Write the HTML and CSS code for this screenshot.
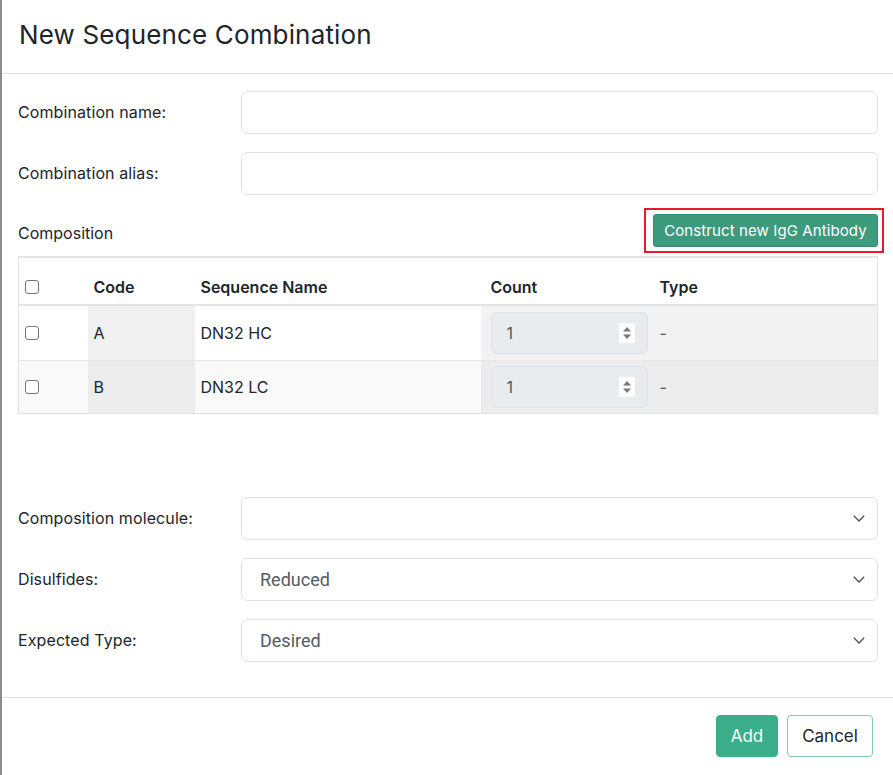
FILE: index.html
```html
<!DOCTYPE html>
<html>
<head>
<meta charset="utf-8">
<link rel="stylesheet" href="styles.css">
</head>
<body>
<div class="modal">
  <div class="modal-header">
    <h1 class="title">New Sequence Combination</h1>
  </div>
  <div class="modal-body">
    <div class="form-row">
      <label class="label">Combination name:</label>
      <div class="control"><input class="input" type="text"></div>
    </div>
    <div class="form-row">
      <label class="label">Combination alias:</label>
      <div class="control"><input class="input" type="text"></div>
    </div>
    <div class="comp-head">
      <span class="comp-label">Composition</span>
      <div class="highlight"><button class="btn-construct">Construct new IgG Antibody</button></div>
    </div>
    <table class="table">
      <thead>
        <tr>
          <th class="c-check"><span class="cb"></span></th>
          <th class="c-code">Code</th>
          <th class="c-name">Sequence Name</th>
          <th class="c-count">Count</th>
          <th class="c-type">Type</th>
        </tr>
      </thead>
      <tbody>
        <tr class="row-a">
          <td class="c-check"><span class="cb"></span></td>
          <td class="c-code shade">A</td>
          <td class="c-name">DN32 HC</td>
          <td class="c-count shade"><div class="num"><span>1</span><span class="spin"><svg width="10" height="16" viewBox="0 0 10 16"><path d="M1 6.5 L5 2 L9 6.5 Z" fill="#777"/><path d="M1 9.5 L5 14 L9 9.5 Z" fill="#777"/></svg></span></div></td>
          <td class="c-type shade">-</td>
        </tr>
        <tr class="row-b">
          <td class="c-check"><span class="cb"></span></td>
          <td class="c-code shade">B</td>
          <td class="c-name">DN32 LC</td>
          <td class="c-count shade"><div class="num"><span>1</span><span class="spin"><svg width="10" height="16" viewBox="0 0 10 16"><path d="M1 6.5 L5 2 L9 6.5 Z" fill="#777"/><path d="M1 9.5 L5 14 L9 9.5 Z" fill="#777"/></svg></span></div></td>
          <td class="c-type shade">-</td>
        </tr>
      </tbody>
    </table>
    <div class="spacer"></div>
    <div class="form-row">
      <label class="label">Composition molecule:</label>
      <div class="control"><div class="select"><span></span><svg class="chev" width="12" height="7" viewBox="0 0 12 7"><path d="M0.8 0.8 L6 6 L11.2 0.8" fill="none" stroke="#4a4f55" stroke-width="1.3"/></svg></div></div>
    </div>
    <div class="form-row">
      <label class="label">Disulfides:</label>
      <div class="control"><div class="select"><span>Reduced</span><svg class="chev" width="12" height="7" viewBox="0 0 12 7"><path d="M0.8 0.8 L6 6 L11.2 0.8" fill="none" stroke="#4a4f55" stroke-width="1.3"/></svg></div></div>
    </div>
    <div class="form-row">
      <label class="label">Expected Type:</label>
      <div class="control"><div class="select"><span>Desired</span><svg class="chev" width="12" height="7" viewBox="0 0 12 7"><path d="M0.8 0.8 L6 6 L11.2 0.8" fill="none" stroke="#4a4f55" stroke-width="1.3"/></svg></div></div>
    </div>
  </div>
  <div class="modal-footer">
    <button class="btn-add">Add</button>
    <button class="btn-cancel">Cancel</button>
  </div>
</div>
</body>
</html>
```
FILE: styles.css
```css
* { box-sizing: border-box; }
html, body { margin: 0; padding: 0; background: #fff; }
body {
  font-family: "Inter", "Noto Sans", sans-serif;
  color: #212529;
  width: 893px;
  height: 775px;
  overflow: hidden;
}
.modal {
  border-left: 2px solid #8c8c8c;
  height: 775px;
  width: 893px;
}
.modal-header {
  height: 74px;
  border-bottom: 1px solid #e5e5e5;
  padding: 0 0 0 17px;
  display: flex;
  align-items: center;
}
.title {
  margin: 0;
  font-size: 26px;
  font-weight: 400;
  letter-spacing: 0.15px;
  padding-bottom: 4px;
}
.modal-body {
  padding: 17px 15px 0 16px;
  height: 624px;
  border-bottom: 1px solid #e5e5e5;
}
.form-row {
  display: flex;
  align-items: center;
  height: 43px;
  margin-bottom: 18px;
}
.label {
  width: 223px;
  font-size: 16px;
  letter-spacing: 0.1px;
  padding-bottom: 1px;
  flex: none;
}
.control { flex: 1; }
.input {
  display: block;
  width: 100%;
  height: 43px;
  border: 1px solid #dee2e6;
  border-radius: 6px;
  background: #fff;
  font: inherit;
}
.comp-head {
  display: flex;
  justify-content: space-between;
  align-items: center;
  height: 46px;
  margin-top: -6px;
  margin-right: -6px;
}
.comp-label {
  font-size: 16px;
  padding-top: 6px;
}
.highlight {
  border: 2px solid #e8192c;
  padding: 4px 4px 4px 7px;
}
.btn-construct {
  display: block;
  height: 33px;
  width: 225px;
  padding: 0;
  background: #3e9a7c;
  border: 1px solid #36896e;
  border-radius: 3px;
  color: #fff;
  font-family: "Inter", sans-serif;
  font-size: 15px;
  font-weight: 400;
  letter-spacing: 0.1px;
}
.table {
  width: 860px;
  margin-top: 3px;
  border-collapse: collapse;
  border: 1px solid #dee2e6;
  border-top: 2px solid #e3e3e3;
  font-size: 16px;
}
.table th {
  height: 48px;
  text-align: left;
  font-weight: 600;
  border-bottom: 2px solid #e3e3e3;
  padding: 0 6px 7px;
  vertical-align: bottom;
}
.table td {
  padding: 0 6px;
  vertical-align: middle;
  border-bottom: 1px solid #e6e6e6;
}
.row-a td { height: 55px; }
.row-b td { height: 53px; border-bottom: none; background: #f9f9f9; }
.row-a td.shade { background: #f0f0f0; }
.row-b td.shade { background: #ececec; }
.row-a td.c-count, .row-a td.c-type { background: #f2f2f2; }
.c-check { width: 69px; }
.c-code { width: 107px; }
.c-name { width: 286px; }
.c-count { width: 168px; padding-left: 10px !important; }
.c-type { color: #555; }
th.c-count { padding-left: 10px !important; }
th.c-type { color: #212529; }
th .cb { margin-bottom: 3px; }
.cb {
  display: block;
  width: 14px;
  height: 14px;
  border: 1px solid #767676;
  border-radius: 3px;
  background: #fff;
}
.num {
  width: 157px;
  height: 42px;
  background: #e9ecef;
  border: 1px solid #dee2e6;
  border-radius: 6px;
  display: flex;
  align-items: center;
  justify-content: space-between;
  padding: 0 12px 0 15px;
  color: #555;
  font-size: 16px;
}
.spin {
  display: flex;
  align-items: center;
  justify-content: center;
  width: 16px;
  height: 20px;
  background: #fff;
}
.spin svg { display: block; }
.spacer { height: 83px; }
.select {
  height: 43px;
  border: 1px solid #dee2e6;
  border-radius: 6px;
  display: flex;
  align-items: center;
  justify-content: space-between;
  padding: 0 12px 0 18px;
  font-family: "Roboto", sans-serif;
  font-size: 18px;
  color: #555a60;
}
.chev { display: block; }
.modal-footer {
  display: flex;
  justify-content: flex-end;
  gap: 9px;
  padding: 17px 20px 0 0;
}
.btn-add {
  height: 42px;
  width: 62px;
  background: #3aae89;
  border: 1px solid #3aae89;
  border-radius: 4px;
  color: #fff;
  font-family: "Inter", sans-serif;
  font-size: 17px;
}
.btn-cancel {
  height: 42px;
  width: 86px;
  background: #fff;
  border: 1px solid #7ccfb2;
  border-radius: 4px;
  color: #212529;
  font-family: "Inter", sans-serif;
  font-size: 17px;
}
```
